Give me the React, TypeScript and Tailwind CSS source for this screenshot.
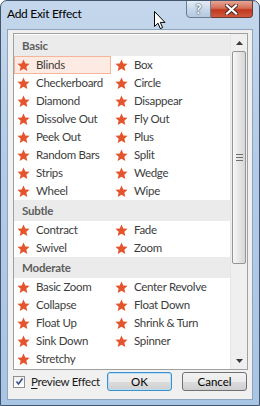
import React from 'react';

const font = "font-['Segoe_UI','Lato',sans-serif]";

const groups: { title: string; rows: string[][] }[] = [
  {
    title: 'Basic',
    rows: [
      ['Blinds', 'Box'],
      ['Checkerboard', 'Circle'],
      ['Diamond', 'Disappear'],
      ['Dissolve Out', 'Fly Out'],
      ['Peek Out', 'Plus'],
      ['Random Bars', 'Split'],
      ['Strips', 'Wedge'],
      ['Wheel', 'Wipe'],
    ],
  },
  { title: 'Subtle', rows: [['Contract', 'Fade'], ['Swivel', 'Zoom']] },
  {
    title: 'Moderate',
    rows: [
      ['Basic Zoom', 'Center Revolve'],
      ['Collapse', 'Float Down'],
      ['Float Up', 'Shrink & Turn'],
      ['Sink Down', 'Spinner'],
      ['Stretchy'],
    ],
  },
];

const Star = () => (
  <svg width="13" height="13" viewBox="0 0 24 24" className="shrink-0">
    <path
      d="M12 0.8l3.3 7.3 7.9.8-5.9 5.3 1.7 7.9L12 18l-7 4.1 1.7-7.9-5.9-5.3 7.9-.8z"
      fill="#e4552e"
    />
  </svg>
);

const Effect: React.FC<{ name: string; selected?: boolean }> = ({ name, selected }) => (
  <div
    className={
      'h-[18px] flex items-center gap-[6px] pl-[2px] border ' +
      (selected ? 'border-[#f5b59a] bg-[#fdebe3]' : 'border-transparent')
    }
  >
    <Star />
    <span className="text-[11.5px] tracking-[-0.3px] text-[#3d3d3d] whitespace-nowrap leading-none">{name}</span>
  </div>
);

const Arrow: React.FC<{ up?: boolean }> = ({ up }) => (
  <div className="h-[17px] flex items-center justify-center">
    <svg width="7" height="4" viewBox="0 0 7 4">
      <path d={up ? 'M0 4L3.5 0L7 4z' : 'M0 0L3.5 4L7 0z'} fill="#3a3a3a" />
    </svg>
  </div>
);

export default function App() {
  return (
    <div className={`${font} relative w-[260px] h-[406px] border border-[#42556c] rounded-t-[7px] bg-[linear-gradient(#c4d7ec,#b3cbe6_40%,#a9c5e5)] flex flex-col overflow-hidden`}>
      {/* title bar */}
      <div className="h-[28px] flex items-start justify-between">
        <span className="pl-[6px] pt-[7px] text-[12px] tracking-[-0.3px] text-black leading-none">Add Exit Effect</span>
        <div className="flex mr-[6px] -mt-px">
          <div className="w-[25px] h-[18px] border border-[#6b7d93] rounded-bl-[4px] bg-[linear-gradient(#e3ecf6,#c9d8ea_50%,#b4c8df)] flex items-center justify-center text-[13px] font-bold text-white leading-none [text-shadow:0_0_2px_#33475f,0_0_1px_#33475f]">
            ?
          </div>
          <div className="w-[42px] h-[18px] border border-l-0 border-[#6b3a33] rounded-br-[4px] bg-[linear-gradient(#e7a595,#d46e58_45%,#c0391f_55%,#cf5a3e)] flex items-center justify-center">
            <svg width="13" height="11" viewBox="0 0 13 11">
              <path d="M2 1.5L11 9.5M11 1.5L2 9.5" stroke="#4a2a25" strokeWidth="4" strokeLinecap="square" />
              <path d="M2 1.5L11 9.5M11 1.5L2 9.5" stroke="#ffffff" strokeWidth="2.2" strokeLinecap="square" />
            </svg>
          </div>
        </div>
      </div>

      {/* client area */}
      <div className="mx-[6px] h-[371px] border border-[#8ea3bd] bg-[#f0f0f0] flex flex-col">
        <div className="ml-[5px] mt-[3px] w-[235px] h-[337px] border border-[#a0a0a0] bg-white flex overflow-hidden">
          <div className="w-[216px] pt-[1px] flex flex-col">
            {groups.map(g => (
              <div key={g.title}>
                <div className="h-[21px] bg-[#ebebeb] flex items-center pl-[8px] text-[11.5px] tracking-[-0.2px] font-bold text-[#5e5e5e] leading-none">
                  {g.title}
                </div>
                {g.rows.map((r, i) => (
                  <div key={i} className="grid grid-cols-[97px_1fr] gap-x-[1px]">
                    <Effect name={r[0]} selected={r[0] === 'Blinds'} />
                    {r[1] ? <Effect name={r[1]} /> : <div />}
                  </div>
                ))}
              </div>
            ))}
          </div>
          {/* scrollbar */}
          <div className="w-[17px] bg-[#efefef] border-l border-[#e6e6e6] flex flex-col">
            <Arrow up />
            <div className="ml-[1px] mr-[1px] h-[213px] border border-[#959595] rounded-[2px] bg-[linear-gradient(to_right,#f7f7f7,#e6e6e6_50%,#d6d6d6)] flex flex-col items-center justify-center gap-[2px]">
              <div className="w-[7px] h-px bg-[#6e6e6e]" />
              <div className="w-[7px] h-px bg-[#6e6e6e]" />
              <div className="w-[7px] h-px bg-[#6e6e6e]" />
            </div>
            <div className="flex-1" />
            <Arrow />
          </div>
        </div>

        {/* bottom row */}
        <div className="mt-[2px] h-[19px] flex items-center pl-[5px] pr-[5px]">
          <div className="w-[12px] h-[12px] border border-[#8e8f8f] bg-[linear-gradient(#f0f0f0,#ffffff)] flex items-center justify-center">
            <svg width="9" height="9" viewBox="0 0 9 9">
              <path d="M1.5 4.5L3.5 7L7.5 1.5" stroke="#3b4f8a" strokeWidth="1.6" fill="none" />
            </svg>
          </div>
          <span className="ml-[6px] text-[11.5px] tracking-[-0.3px] text-[#1a1a1a] leading-none whitespace-nowrap">
            <span className="underline underline-offset-2">P</span>review Effect
          </span>
          <div className="flex-1" />
          <button className="w-[65px] h-[19px] rounded-[3px] border border-[#3c8fcb] shadow-[inset_0_0_0_1px_#b7e0f7] bg-[linear-gradient(#f2f2f2,#ebebeb_50%,#dddddd_50%,#cfcfcf)] text-[11.5px] text-black leading-none">
            OK
          </button>
          <button className="ml-[10px] w-[65px] h-[19px] rounded-[3px] border border-[#707070] bg-[linear-gradient(#f2f2f2,#ebebeb_50%,#dddddd_50%,#cfcfcf)] text-[11.5px] text-black leading-none">
            Cancel
          </button>
        </div>
      </div>

      {/* mouse pointer */}
      <svg width="12" height="19" viewBox="0 0 12 19" className="absolute left-[153px] top-[10px]">
        <path d="M0.5 0.5L0.5 15.5L4 12.2L6.3 17.6L8.6 16.6L6.3 11.4L11 11.4Z" fill="#ffffff" stroke="#000000" strokeWidth="1" strokeLinejoin="round" />
      </svg>
    </div>
  );
}
